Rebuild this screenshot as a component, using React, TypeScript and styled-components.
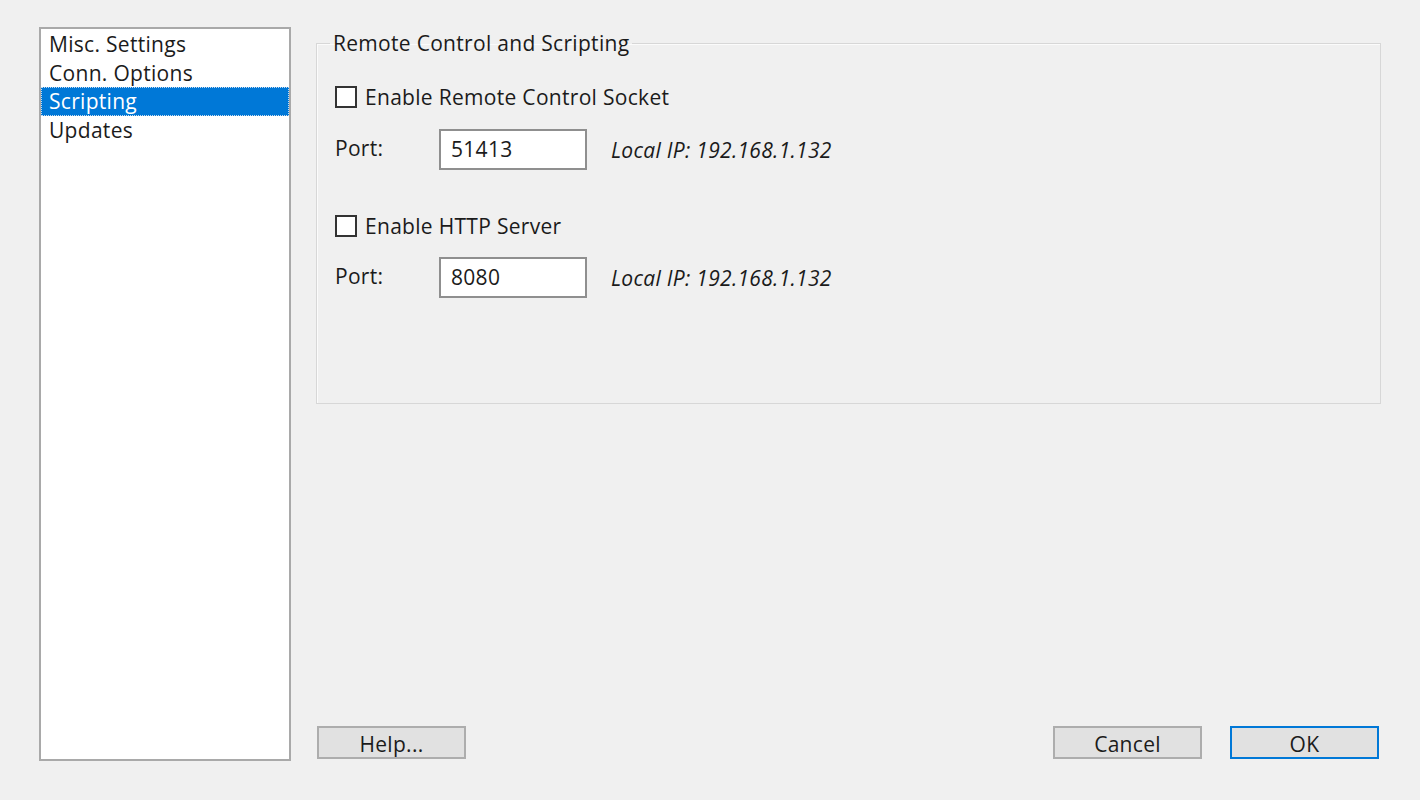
import React from "react";
import styled, { createGlobalStyle } from "styled-components";

const Global = createGlobalStyle`
  html, body { margin: 0; padding: 0; background: #f0f0f0; }
  body { font-family: "Open Sans", "Noto Sans", sans-serif; color: #1b1b1b; }
  #root { height: 800px; }
`;

const Dialog = styled.div`
  display: flex;
  height: 800px;
  box-sizing: border-box;
  padding: 27px 0 0 39px;
  background: #f0f0f0;
`;

const ListBox = styled.ul`
  list-style: none;
  margin: 0;
  padding: 1px 0 0;
  width: 252px;
  height: 734px;
  box-sizing: border-box;
  background: #fff;
  border: 2px solid #a9a9a9;
  flex: none;
`;

const ListItem = styled.li<{ $selected?: boolean }>`
  height: 28.7px;
  line-height: 28px;
  padding-left: 8px;
  font-size: 21px;
  box-sizing: border-box;
  letter-spacing: 0.3px;
  background: ${(p) => (p.$selected ? "#0078d7" : "transparent")};
  color: ${(p) => (p.$selected ? "#fff" : "#1b1b1b")};
  outline: ${(p) => (p.$selected ? "1px dotted #c8dcf0" : "none")};
  outline-offset: -1px;
`;

const RightColumn = styled.div`
  display: flex;
  flex-direction: column;
  margin-left: 25px;
  width: 1065px;
  height: 734px;
  padding-top: 2px;
  box-sizing: border-box;
`;

const GroupBox = styled.fieldset`
  margin: 0;
  padding: 0 0 105px 18px;
  border: 1px solid #d7d7d7;
  box-shadow: inset 1px 1px 0 #fbfbfb;
`;

const GroupTitle = styled.legend`
  margin-left: -5px;
  padding: 0 3px;
  font-size: 21px;
  line-height: 28px;
  letter-spacing: 0.3px;
`;

const Content = styled.div`
  display: flex;
  flex-direction: column;
  padding-top: 26px;
`;

const CheckRow = styled.label<{ $top?: number }>`
  display: flex;
  align-items: center;
  height: 28px;
  gap: 8px;
  margin-top: ${(p) => p.$top ?? 0}px;
  font-size: 21px;
  letter-spacing: 0.3px;
`;

const CheckBox = styled.span`
  width: 22px;
  height: 22px;
  box-sizing: border-box;
  border: 2px solid #333;
  background: #fff;
  flex: none;
`;

const PortRow = styled.div<{ $top?: number }>`
  display: flex;
  align-items: center;
  height: 41px;
  margin-top: ${(p) => p.$top ?? 0}px;
`;

const PortLabel = styled.span`
  width: 104px;
  font-size: 21px;
  letter-spacing: 0.3px;
  flex: none;
  padding-bottom: 3px;
`;

const PortInput = styled.div`
  width: 148px;
  height: 41px;
  box-sizing: border-box;
  border: 2px solid #8f8f8f;
  background: #fff;
  padding: 0 0 1px 10px;
  display: flex;
  align-items: center;
  font-size: 21px;
  letter-spacing: 0.3px;
`;

const IpText = styled.span`
  margin-left: 24px;
  font-style: italic;
  font-size: 21px;
  letter-spacing: 0.3px;
`;

const ButtonBar = styled.div`
  display: flex;
  margin-top: auto;
  margin-bottom: 2px;
  padding: 0 2px 0 1px;
  align-items: center;
`;

const Button = styled.button<{ $default?: boolean }>`
  width: 149px;
  height: 33px;
  box-sizing: border-box;
  background: #e1e1e1;
  border: 2px solid ${(p) => (p.$default ? "#0078d7" : "#adadad")};
  font-family: "Open Sans", "Noto Sans", sans-serif;
  font-size: 21px;
  letter-spacing: 0.3px;
  color: #1b1b1b;
  padding: 3px 0 0;
  line-height: 1;
`;

const Spacer = styled.div`
  flex: 1;
`;

const ButtonGap = styled.div`
  width: 28px;
`;

export default function App() {
  const items = ["Misc. Settings", "Conn. Options", "Scripting", "Updates"];
  return (
    <>
      <Global />
      <Dialog>
        <ListBox>
          {items.map((it) => (
            <ListItem key={it} $selected={it === "Scripting"}>
              {it}
            </ListItem>
          ))}
        </ListBox>
        <RightColumn>
          <GroupBox>
            <GroupTitle>Remote Control and Scripting</GroupTitle>
            <Content>
              <CheckRow>
                <CheckBox />
                Enable Remote Control Socket
              </CheckRow>
              <PortRow $top={18}>
                <PortLabel>Port:</PortLabel>
                <PortInput>51413</PortInput>
                <IpText>Local IP: 192.168.1.132</IpText>
              </PortRow>
              <CheckRow $top={42}>
                <CheckBox />
                Enable HTTP Server
              </CheckRow>
              <PortRow $top={17}>
                <PortLabel>Port:</PortLabel>
                <PortInput>8080</PortInput>
                <IpText>Local IP: 192.168.1.132</IpText>
              </PortRow>
            </Content>
          </GroupBox>
          <ButtonBar>
            <Button>Help...</Button>
            <Spacer />
            <Button>Cancel</Button>
            <ButtonGap />
            <Button $default>OK</Button>
          </ButtonBar>
        </RightColumn>
      </Dialog>
    </>
  );
}
